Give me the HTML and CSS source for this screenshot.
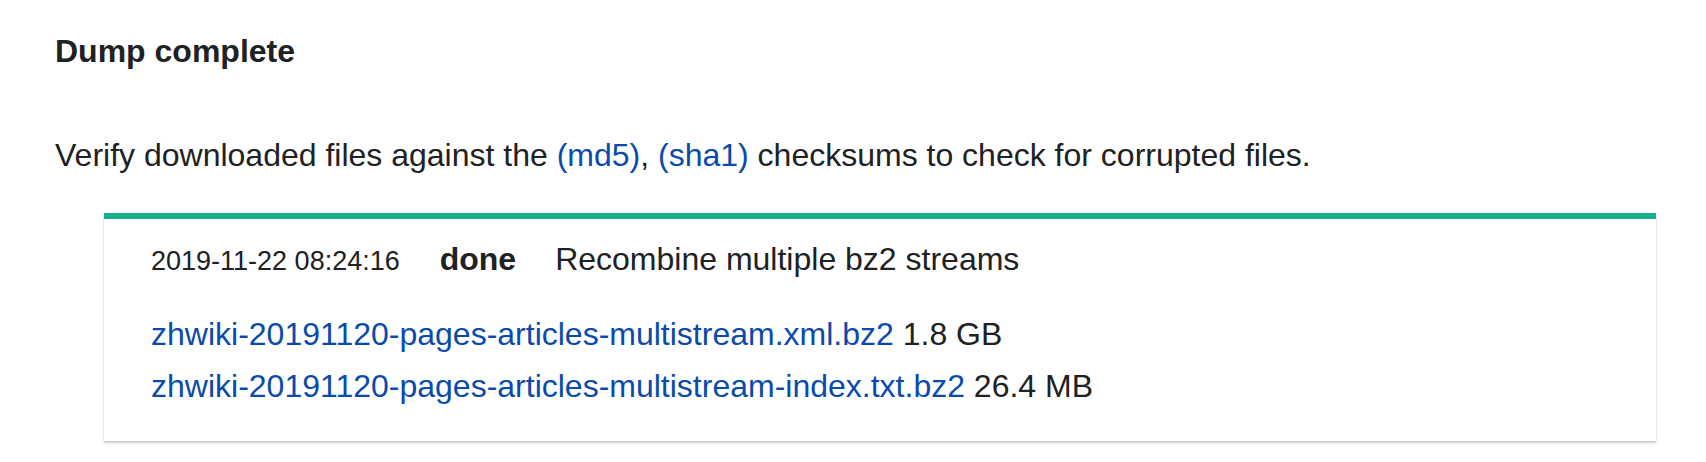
FILE: index.html
```html
<!DOCTYPE html>
<html lang="en">
<head>
<meta charset="utf-8">
<title>Dump complete</title>
<link rel="stylesheet" href="styles.css">
</head>
<body>
<main class="page">
  <h2 class="heading">Dump complete</h2>
  <p class="note">Verify downloaded files against the <a href="#">(md5)</a>, <a href="#">(sha1)</a> checksums to check for corrupted files.</p>
  <ul class="jobs">
    <li class="job job-done">
      <div class="job-head">
        <span class="updates">2019-11-22 08:24:16</span>
        <span class="status">done</span>
        <span class="job-title">Recombine multiple bz2 streams</span>
      </div>
      <ul class="files">
        <li class="file"><a href="#">zhwiki-20191120-pages-articles-multistream.xml.bz2</a> 1.8 GB</li>
        <li class="file"><a href="#">zhwiki-20191120-pages-articles-multistream-index.txt.bz2</a> 26.4 MB</li>
      </ul>
    </li>
  </ul>
</main>
</body>
</html>
```

FILE: styles.css
```css
html, body {
  margin: 0;
  padding: 0;
  background: #ffffff;
  min-height: 100%;
}

body {
  font-family: "Liberation Sans", Arial, sans-serif;
  font-size: 32px;
  line-height: 52px;
  color: #202122;
}

a {
  color: #0b4aad;
  text-decoration: none;
}

.page {
  padding: 25px 0 20px 55px;
}

.heading {
  margin: 0;
  font-size: 32px;
  font-weight: bold;
  line-height: 52px;
}

.note {
  margin: 52px 0 0 0;
}

.jobs {
  list-style: none;
  margin: 32px 0 0 49px;
  padding: 0;
}

.job {
  width: 1552px;
  box-sizing: border-box;
  background: #ffffff;
  border-top: 6px solid #1aae8b;
  padding: 14px 0 29px 47px;
  box-shadow: 0 2px 2px rgba(0, 0, 0, 0.2), 0 0 2px rgba(0, 0, 0, 0.08);
}

.job-head {
  display: flex;
  align-items: baseline;
  height: 52px;
}

.updates {
  font-size: 27px;
}

.status {
  font-weight: bold;
  margin: 0 39px 0 40px;
}

.files {
  list-style: none;
  margin: 23px 0 0 0;
  padding: 0;
}

.file {
  line-height: 52px;
}
```
